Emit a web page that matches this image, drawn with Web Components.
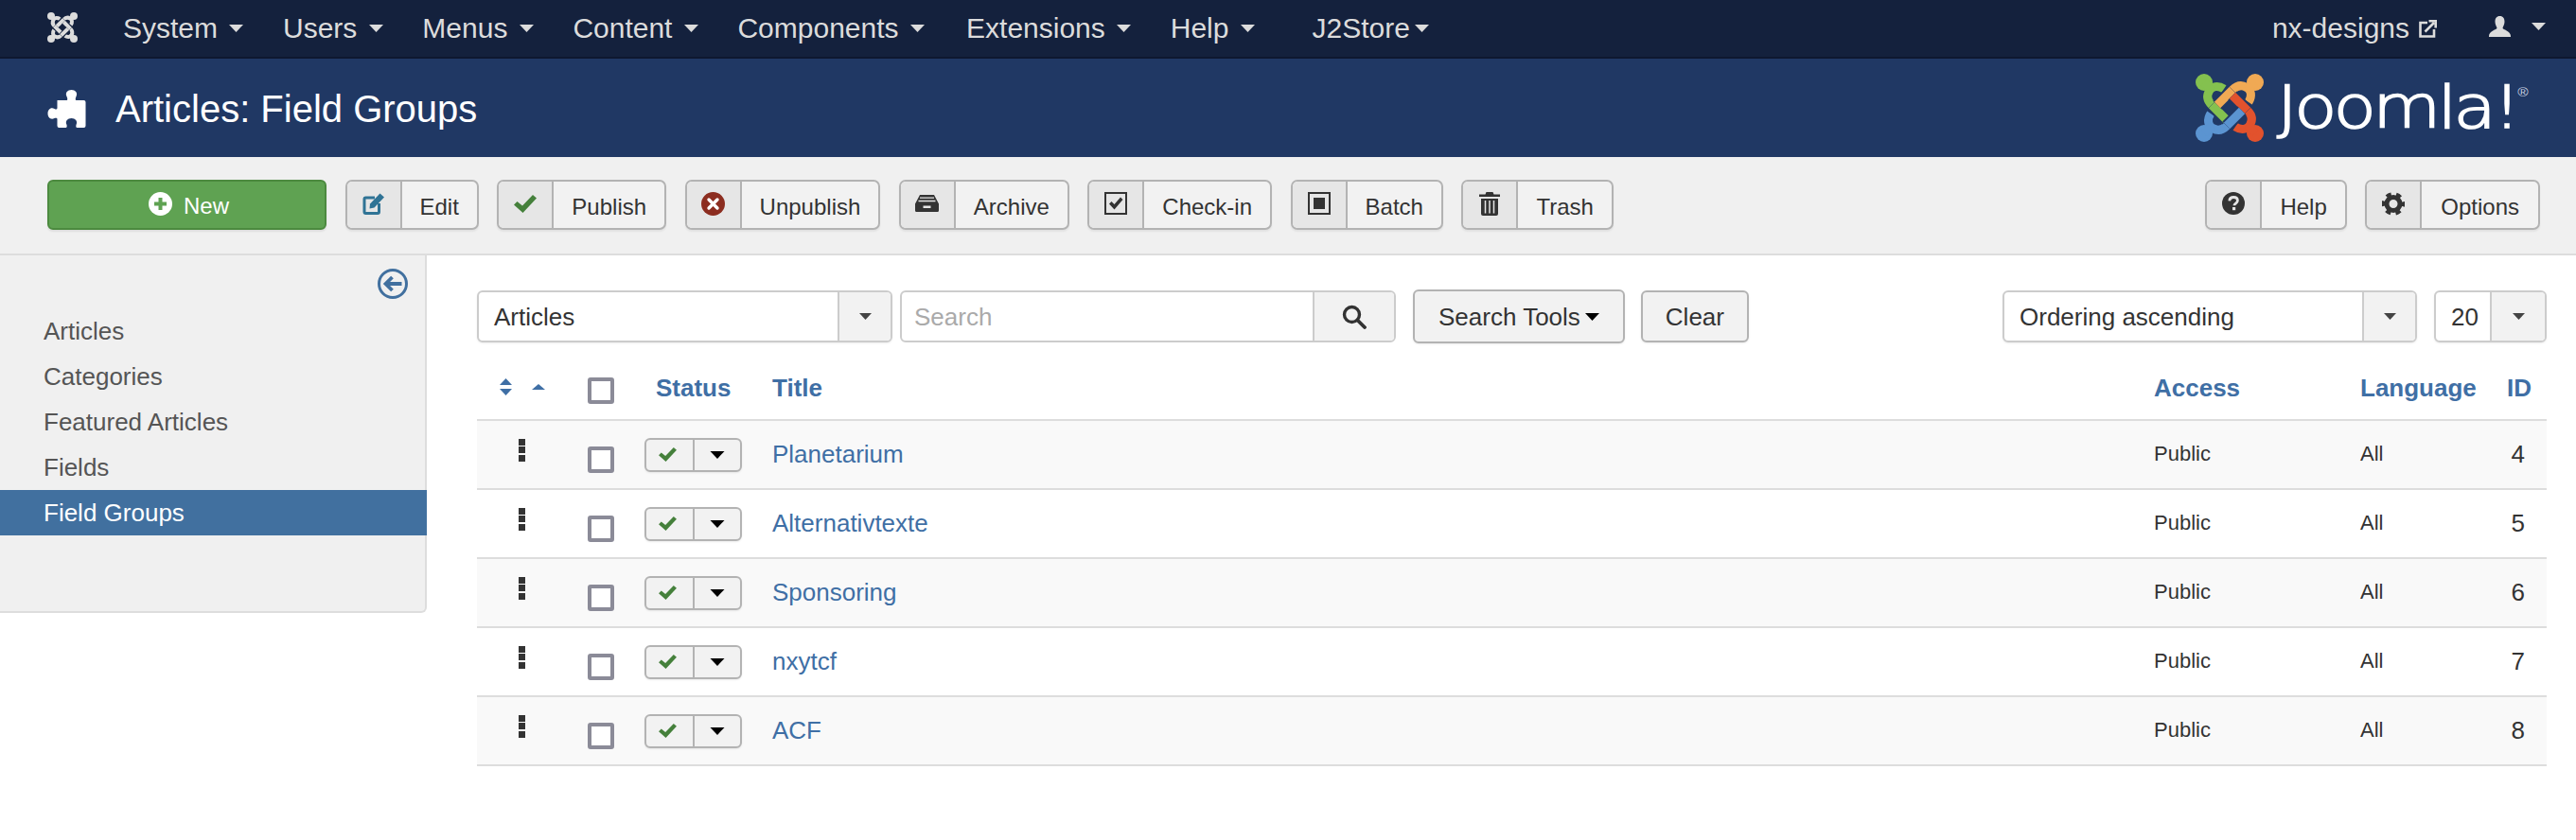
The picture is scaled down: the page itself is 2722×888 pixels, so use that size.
<!DOCTYPE html>
<html lang="en">
<head>
<meta charset="utf-8">
<title>Articles: Field Groups</title>
<style>
  html, body { margin: 0; padding: 0; background: #fff; }
  body { font-family: "Liberation Sans", Arial, sans-serif; color: #333; }
</style>
</head>
<body>
<j-navbar></j-navbar>
<j-header>Articles: Field Groups</j-header>
<j-toolbar>
  <j-new-btn>New</j-new-btn>
  <j-tool-btn icon="edit">Edit</j-tool-btn>
  <j-tool-btn icon="check">Publish</j-tool-btn>
  <j-tool-btn icon="cross">Unpublish</j-tool-btn>
  <j-tool-btn icon="archive">Archive</j-tool-btn>
  <j-tool-btn icon="checkin">Check-in</j-tool-btn>
  <j-tool-btn icon="batch">Batch</j-tool-btn>
  <j-tool-btn icon="trash">Trash</j-tool-btn>
  <j-tool-btn slot="right" icon="help">Help</j-tool-btn>
  <j-tool-btn slot="right" icon="gear" wide>Options</j-tool-btn>
</j-toolbar>
<j-layout>
  <j-sidebar slot="side">
    <j-side-item>Articles</j-side-item>
    <j-side-item>Categories</j-side-item>
    <j-side-item>Featured Articles</j-side-item>
    <j-side-item>Fields</j-side-item>
    <j-side-item active>Field Groups</j-side-item>
  </j-sidebar>
  <j-filter-bar></j-filter-bar>
  <j-table-head></j-table-head>
  <j-row num="4" striped>Planetarium</j-row>
  <j-row num="5">Alternativtexte</j-row>
  <j-row num="6" striped>Sponsoring</j-row>
  <j-row num="7">nxytcf</j-row>
  <j-row num="8" striped>ACF</j-row>
</j-layout>

<script>
// icons used by several elements
const ICONS = {
  edit: `<svg width="24" height="24" viewBox="0 0 24 24" fill="none"><path d="M13 6H3.500A1.500 1.500 0 0 0 2 7.500V21a1.500 1.500 0 0 0 1.500 1.500H16a1.500 1.500 0 0 0 1.500-1.500V12" stroke="#2f7395" stroke-width="3"/><path d="M8 12.500 18.500 1.500 23 5.500 12.500 16.500 7.500 17.500Z" fill="#2f7395"/></svg>`,
  check: `<svg width="24" height="19" viewBox="0 0 24 19"><path d="M0 10.500 3.500 7 9 11.500 20 0l4 3.500L9.500 19Z" fill="#45803b"/></svg>`,
  cross: `<svg width="25" height="25" viewBox="0 0 25 25"><circle cx="12.500" cy="12.500" r="12.500" fill="#8c2d20"/><path d="M8 8l9 9M17 8l-9 9" stroke="#fff" stroke-width="3.400" stroke-linecap="round"/></svg>`,
  archive: `<svg width="25" height="18" viewBox="0 0 25 18"><path d="M5 0H20L25 9.500V16.500A1.500 1.500 0 0 1 23.500 18H1.500A1.500 1.500 0 0 1 0 16.500V9.500Z" fill="#333"/><path d="M5 3.200H20M3.500 6.500H21.500" stroke="#e6e6e6" stroke-width="1.300"/><rect x="8.500" y="11.500" width="8" height="2.500" fill="#e6e6e6"/></svg>`,
  checkin: `<svg width="24" height="24" viewBox="0 0 24 24" fill="none"><rect x="1" y="1" width="22" height="22" stroke="#333" stroke-width="2"/><path d="M5 12.500 7.500 10 10.500 13 17 5.500 19.500 8 10.500 18.500Z" fill="#333"/></svg>`,
  batch: `<svg width="24" height="24" viewBox="0 0 24 24" fill="none"><rect x="1" y="1" width="22" height="22" stroke="#333" stroke-width="2"/><rect x="6" y="6" width="12" height="12" fill="#333"/></svg>`,
  trash: `<svg width="24" height="25" viewBox="0 0 24 25"><path d="M8.500 0h7l1 2.500H23V5H1V2.500h6.500Z" fill="#333"/><path d="M3 7h18v16a2 2 0 0 1-2 2H5a2 2 0 0 1-2-2Z" fill="#333"/><path d="M7.500 9v13.500M12 9v13.500M16.500 9v13.500" stroke="#e6e6e6" stroke-width="1.500"/></svg>`,
  help: `<svg width="24" height="24" viewBox="0 0 24 24"><circle cx="12" cy="12" r="12" fill="#333"/><path d="M7.800 9.300C8 6.800 9.800 5.500 12.200 5.500c2.600 0 4.200 1.500 4.200 3.500 0 3-3.500 3-3.500 5.200" fill="none" stroke="#e6e6e6" stroke-width="2.800"/><rect x="11" y="16" width="3.200" height="3.200" fill="#e6e6e6"/></svg>`,
  gear: `<svg width="24" height="25" viewBox="0 0 24 25" fill="none"><circle cx="12" cy="12.500" r="7" stroke="#333" stroke-width="5"/><circle cx="12" cy="12.500" r="10.500" stroke="#333" stroke-width="3.500" stroke-dasharray="5.500 5.500" stroke-dashoffset="2.700"/></svg>`,
  search: `<svg width="26" height="26" viewBox="0 0 26 26" fill="none"><circle cx="10.500" cy="10.500" r="8" stroke="#333" stroke-width="3.400"/><path d="M16.500 16.500 24 24" stroke="#333" stroke-width="3.800" stroke-linecap="round"/></svg>`,
  caretDown: `<svg width="15" height="8" viewBox="0 0 15 8" style="display:block"><path d="M0 0H15L7.500 8Z" fill="currentColor"/></svg>`
};

// one limb of the Joomla mark, rotated four times around the centre
function joomlaMark(size, colors, gap) {
  const arm = "M30 16C24 12 17 13 14.500 18C11 24 13 29 17 33";
  const bar = "M17 33L33 49";
  const limb = (color, angle) => `
    <g transform="rotate(${angle} 36 36)">
      <path d="${arm}" fill="none" stroke="${color}" stroke-width="9"/>
      <circle cx="9" cy="9" r="9" fill="${color}"/>
      <path d="M9 9L17 18" stroke="${color}" stroke-width="9"/>
    </g>`;
  const over = (color, angle) => `
    <g transform="rotate(${angle} 36 36)">
      <path d="${bar}" stroke="${gap}" stroke-width="13" fill="none"/>
      <path d="${bar}" stroke="${color}" stroke-width="9" fill="none"/>
    </g>`;
  const angles = [0, 90, 180, 270];
  return `<svg width="${size}" height="${size}" viewBox="0 0 72 72" style="display:block;flex:none">
    ${angles.map((a, i) => limb(colors[i], a)).join("")}
    ${angles.map((a, i) => over(colors[i], a)).join("")}
  </svg>`;
}

class JElement extends HTMLElement {
  constructor() {
    super();
    this.attachShadow({ mode: "open" });
  }
  connectedCallback() {
    this.shadowRoot.innerHTML = this.render();
  }
}

class JNavbar extends JElement {
  render() {
    const items = ["System", "Users", "Menus", "Content", "Components", "Extensions", "Help"];
    return `
      <style>
        :host {
          display: flex;
          align-items: center;
          box-sizing: border-box;
          height: 62px;
          padding: 0 32px 0 50px;
          background: #14213d;
          border-bottom: 2px solid #0e1830;
          color: #dcdcdc;
          font-size: 30px;
        }
        .brand { margin-right: 48px; margin-top: -2px; }
        .item { display: flex; align-items: center; margin-right: 41.700px; }
        .item svg { margin-left: 12.300px; }
        .item.long { margin-right: 44.200px; }
        .store { margin-left: 19px; }
        .store svg { margin-left: 5px; }
        .site { display: flex; align-items: center; gap: 10px; margin-left: auto; }
        .user { display: flex; align-items: center; gap: 22px; margin-left: 55px; margin-top: -4px; }
      </style>
      <div class="brand">${joomlaMark(32, ["#dcdcdc", "#dcdcdc", "#dcdcdc", "#dcdcdc"], "#14213d")}</div>
      ${items.map((t) => `<div class="item${t === "Components" ? " long" : ""}">${t}${ICONS.caretDown}</div>`).join("")}
      <div class="item store">J2Store${ICONS.caretDown}</div>
      <div class="site">nx-designs
        <svg width="19" height="19" viewBox="0 0 19 19" fill="none">
          <path d="M9 3H1.500V17.500H16V10" stroke="#dcdcdc" stroke-width="2.600"/>
          <path d="M6.500 12.500 16 3M10.500 1.300H17.700V8.500" stroke="#dcdcdc" stroke-width="2.600"/>
        </svg>
      </div>
      <div class="user">
        <svg width="23" height="22" viewBox="0 0 23 22">
          <path d="M11.500 0C15 0 16.500 2.500 16.500 6C16.500 9 15 11 14.500 12.500C14.500 14.500 23 15.500 23 21V22H0V21C0 15.500 8.500 14.500 8.500 12.500C8 11 6.500 9 6.500 6C6.500 2.500 8 0 11.500 0Z" fill="#dcdcdc"/>
        </svg>
        ${ICONS.caretDown}
      </div>`;
  }
}

class JHeader extends JElement {
  render() {
    return `
      <style>
        :host {
          display: flex;
          align-items: center;
          justify-content: space-between;
          box-sizing: border-box;
          height: 104px;
          padding: 0 39px 0 50px;
          background: #203864;
          color: #fff;
          font-size: 40px;
        }
        .title { display: flex; align-items: center; gap: 31px; padding-top: 2px; }
        .logo { display: flex; align-items: center; }
        svg { display: block; }
        .word {
          width: 277px;
          margin-left: 14px;
          white-space: nowrap;
          font-family: "DejaVu Sans", sans-serif;
          font-weight: 200;
          font-size: 62px;
          line-height: 72px;
          letter-spacing: -3px;
          -webkit-text-stroke: 1.600px #fff;
          transform: scaleX(1.190);
          transform-origin: left center;
        }
        .word sup {
          font-family: "Liberation Sans", sans-serif;
          font-size: 13px;
          line-height: 0;
          letter-spacing: 0;
          vertical-align: 33px;
          -webkit-text-stroke: 0;
          color: #c9d2e0;
        }
      </style>
      <div class="title">
        <svg width="41" height="40" viewBox="0 0 40 40">
          <path d="M10 11H20C21 11 21 9 20 7C18 3 21 0 25 0C29 0 32 3 30 7C29 9 29 11 30 11H38Q40 11 40 13V38Q40 40 38 40H31C30 40 29.500 39 30 37C32 33 29 30 25 30C21 30 18 33 20 37C20.500 39 20 40 19 40H12Q10 40 10 38V31C10 30 9 29.500 7 30C3 32 0 29 0 25C0 21 3 18 7 20C9 21 10 20.500 10 19Z" fill="#fff"/>
        </svg>
        <slot></slot>
      </div>
      <div class="logo">
        ${joomlaMark(72, ["#84c14f", "#f0a954", "#e2522d", "#5b94d1"], "#203864")}
        <div class="word">Joomla!<sup>®</sup></div>
      </div>`;
  }
}

class JToolbar extends JElement {
  render() {
    return `
      <style>
        :host {
          display: flex;
          box-sizing: border-box;
          height: 104px;
          padding: 24px 38px 0 50px;
          background: #f0f0f0;
          border-bottom: 2px solid #ddd;
        }
        .group { display: flex; gap: 19.500px; align-items: flex-start; }
        .right { margin-left: auto; }
      </style>
      <div class="group"><slot></slot></div>
      <div class="group right"><slot name="right"></slot></div>`;
  }
}

class JNewBtn extends JElement {
  render() {
    return `
      <style>
        :host {
          display: flex;
          align-items: center;
          justify-content: center;
          gap: 12px;
          box-sizing: border-box;
          width: 295px;
          height: 53px;
          padding-left: 4px;
          background: #5fa252;
          border: 2px solid #4c8a3f;
          border-radius: 6px;
          color: #fff;
          font-size: 24px;
          box-shadow: 0 2px 2px rgba(0,0,0,.08);
        }
        svg { display: block; margin-bottom: 2px; }
        .label { padding-top: 3px; }
      </style>
      <svg width="25" height="25" viewBox="0 0 25 25">
        <circle cx="12.500" cy="12.500" r="12.500" fill="#fff"/>
        <path d="M12.500 6V19M6 12.500H19" stroke="#5fa252" stroke-width="4"/>
      </svg>
      <div class="label"><slot></slot></div>`;
  }
}

class JToolBtn extends JElement {
  render() {
    return `
      <style>
        :host {
          display: flex;
          box-sizing: border-box;
          height: 53px;
          background: #f2f2f2;
          border: 2px solid #b3b3b3;
          border-radius: 7px;
          color: #333;
          font-size: 24px;
          box-shadow: 0 2px 2px rgba(0,0,0,.06);
          overflow: hidden;
        }
        .icon {
          display: flex;
          align-items: center;
          justify-content: center;
          padding-bottom: 3px;
          box-sizing: border-box;
          background: #e6e6e6;
          border-right: 2px solid #b3b3b3;
          flex: none;
          width: 58px;
        }
        .label { display: flex; align-items: center; padding: 4px 19px 0; }
        :host([wide]) .label { padding: 4px 20px 0; }
        svg { display: block; }
      </style>
      <div class="icon">${ICONS[this.getAttribute("icon")]}</div>
      <div class="label"><slot></slot></div>`;
  }
}

class JLayout extends JElement {
  render() {
    return `
      <style>
        :host { display: flex; align-items: flex-start; }
        .main { flex: 1; min-width: 0; box-sizing: border-box; padding: 36px 31px 0 53px; }
      </style>
      <slot name="side"></slot>
      <div class="main"><slot></slot></div>`;
  }
}

class JSidebar extends JElement {
  render() {
    return `
      <style>
        :host {
          display: block;
          flex: none;
          box-sizing: border-box;
          width: 451px;
          height: 378px;
          padding-top: 14px;
          background: #f0f0f0;
          border-right: 2px solid #ddd;
          border-bottom: 2px solid #ddd;
          border-bottom-right-radius: 6px;
        }
        .toggle { display: flex; justify-content: flex-end; padding-right: 18px; margin-bottom: 10px; }
        svg { display: block; }
      </style>
      <div class="toggle">
        <svg width="32" height="32" viewBox="0 0 32 32" fill="none">
          <circle cx="16" cy="16" r="14.500" stroke="#41709f" stroke-width="3"/>
          <path d="M25.500 16H9M15.500 9 8.500 16l7 7" stroke="#41709f" stroke-width="3.800"/>
        </svg>
      </div>
      <slot></slot>`;
  }
}

class JSideItem extends JElement {
  render() {
    return `
      <style>
        :host {
          display: flex;
          align-items: center;
          box-sizing: border-box;
          height: 48px;
          padding: 1px 0 0 46px;
          color: #555;
          font-size: 26px;
        }
        :host([active]) {
          margin-right: -2px;
          background: #41709f;
          color: #fff;
        }
      </style>
      <slot></slot>`;
  }
}

class JSelect extends JElement {
  render() {
    const width = this.getAttribute("width");
    const pane = this.getAttribute("pane") || "56";
    return `
      <style>
        :host {
          display: flex;
          box-sizing: border-box;
          width: ${width}px;
          height: 55px;
          flex: none;
          background: #fff;
          border: 2px solid #ccc;
          border-radius: 6px;
          color: #333;
          font-size: 26px;
          box-shadow: 0 1px 2px rgba(0,0,0,.08);
          overflow: hidden;
        }
        .value { flex: 1; display: flex; align-items: center; padding: 1px 0 0 16px; }
        .arrow {
          display: flex;
          align-items: center;
          justify-content: center;
          box-sizing: border-box;
          width: ${pane}px;
          background: #f2f2f2;
          border-left: 2px solid #ccc;
          color: #444;
        }
        .arrow svg { width: 13px; height: 7px; }
      </style>
      <div class="value"><slot></slot></div>
      <div class="arrow">${ICONS.caretDown}</div>`;
  }
}

class JFilterBar extends JElement {
  render() {
    return `
      <style>
        :host {
          display: flex;
          align-items: center;
          height: 57px;
          color: #333;
          font-size: 26px;
        }
        .search {
          display: flex;
          box-sizing: border-box;
          width: 524px;
          height: 55px;
          margin-left: 8px;
          background: #fff;
          border: 2px solid #ccc;
          border-radius: 6px;
          overflow: hidden;
        }
        .placeholder { flex: 1; display: flex; align-items: center; padding: 1px 0 0 13px; color: #aaa; }
        .go {
          display: flex;
          align-items: center;
          justify-content: center;
          width: 86px;
          box-sizing: border-box;
          background: #f2f2f2;
          border-left: 2px solid #ccc;
        }
        .btn {
          display: flex;
          align-items: center;
          box-sizing: border-box;
          background: #f2f2f2;
          border: 2px solid #b3b3b3;
          border-radius: 6px;
          box-shadow: 0 1px 2px rgba(0,0,0,.08);
          padding: 0 25px;
          white-space: nowrap;
        }
        .tools { height: 57px; margin-left: 18px; gap: 5px; padding-top: 1px; }
        .tools svg { color: #000; }
        .clear { height: 55px; margin-left: 17px; padding: 1px 24px 0; }
        .sort { margin-left: auto; }
        .limit { margin-left: 18px; }
        svg { display: block; }
      </style>
      <j-select width="439">Articles</j-select>
      <div class="search">
        <div class="placeholder">Search</div>
        <div class="go">${ICONS.search}</div>
      </div>
      <div class="btn tools">Search Tools${ICONS.caretDown}</div>
      <div class="btn clear">Clear</div>
      <j-select class="sort" width="438">Ordering ascending</j-select>
      <j-select class="limit" width="119" pane="58">20</j-select>`;
  }
}

const COLUMNS = "117px 60px 135px 1fr 218px 155px 42px";

class JTableHead extends JElement {
  render() {
    return `
      <style>
        :host {
          display: grid;
          grid-template-columns: ${COLUMNS};
          align-items: center;
          box-sizing: border-box;
          height: 69px;
          margin-top: 13px;
          padding-top: 1px;
          border-bottom: 2px solid #ddd;
          color: #3f6fa5;
          font-size: 26px;
          font-weight: bold;
        }
        .order { display: flex; gap: 21px; padding-left: 24px; align-items: center; margin-top: -2px; }
        .box {
          box-sizing: border-box;
          width: 28px;
          height: 28px;
          margin-top: 6px;
          background: #fff;
          border: 4px solid #8b8b98;
          border-radius: 3px;
        }
        .status { padding-left: 12px; }
        svg { display: block; }
      </style>
      <div class="order">
        <svg width="13" height="18" viewBox="0 0 13 18"><path d="M6.500 0 13 7H0ZM0 11H13L6.500 18Z" fill="#3f6fa5"/></svg>
        <svg width="14" height="6" viewBox="0 0 14 6"><path d="M7 0 14 6H0Z" fill="#3f6fa5"/></svg>
      </div>
      <div class="box"></div>
      <div class="status">Status</div>
      <div>Title</div>
      <div>Access</div>
      <div>Language</div>
      <div>ID</div>`;
  }
}

class JRow extends JElement {
  render() {
    return `
      <style>
        :host {
          display: grid;
          grid-template-columns: ${COLUMNS};
          align-items: center;
          box-sizing: border-box;
          height: 73px;
          border-bottom: 2px solid #ddd;
          color: #333;
          font-size: 22px;
        }
        :host([striped]) { background: #f9f9f9; }
        .handle { display: flex; flex-direction: column; gap: 1.500px; padding-left: 44px; margin-bottom: 10px; }
        .handle i { display: block; width: 7px; height: 7px; background: #333; }
        .box {
          box-sizing: border-box;
          width: 28px;
          height: 28px;
          margin-top: 10px;
          background: #fff;
          border: 4px solid #8b8b98;
          border-radius: 3px;
        }
        .state {
          display: flex;
          box-sizing: border-box;
          width: 103px;
          height: 36px;
          background: #f2f2f2;
          border: 2px solid #b3b3b3;
          border-radius: 6px;
          box-shadow: 0 1px 2px rgba(0,0,0,.08);
        }
        .state div { display: flex; align-items: center; justify-content: center; }
        .on { box-sizing: border-box; width: 51px; padding-right: 4px; border-right: 2px solid #b3b3b3; }
        .on svg { width: 19px; height: 15px; }
        .more { flex: 1; color: #000; }
        .more svg { width: 16px; height: 8px; }
        .title { color: #3f6fa5; font-size: 26px; }
        .text { padding-bottom: 2px; }
        .num { font-size: 26px; text-align: right; padding-right: 23px; }
      </style>
      <div class="handle"><i></i><i></i><i></i></div>
      <div class="box"></div>
      <div class="state"><div class="on">${ICONS.check}</div><div class="more">${ICONS.caretDown}</div></div>
      <div class="title"><slot></slot></div>
      <div class="text">Public</div>
      <div class="text">All</div>
      <div class="num">${this.getAttribute("num")}</div>`;
  }
}

customElements.define("j-navbar", JNavbar);
customElements.define("j-header", JHeader);
customElements.define("j-toolbar", JToolbar);
customElements.define("j-new-btn", JNewBtn);
customElements.define("j-tool-btn", JToolBtn);
customElements.define("j-layout", JLayout);
customElements.define("j-sidebar", JSidebar);
customElements.define("j-side-item", JSideItem);
customElements.define("j-select", JSelect);
customElements.define("j-filter-bar", JFilterBar);
customElements.define("j-table-head", JTableHead);
customElements.define("j-row", JRow);
</script>
</body>
</html>
